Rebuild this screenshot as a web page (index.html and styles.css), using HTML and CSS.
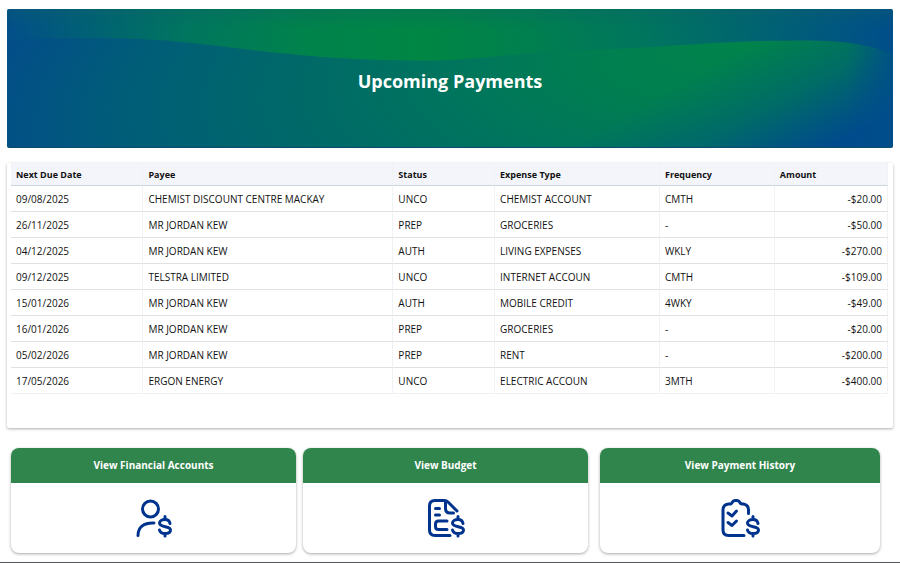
FILE: index.html
```html
<!DOCTYPE html>
<html lang="en">
<head>
<meta charset="utf-8">
<title>Upcoming Payments</title>
<link rel="stylesheet" href="styles.css">
</head>
<body>
<main class="page">
  <header class="banner">
    <svg class="banner-art" viewBox="0 0 886 139" preserveAspectRatio="none" aria-hidden="true">
      <defs>
        <linearGradient id="top" x1="0" y1="0" x2="886" y2="0" gradientUnits="userSpaceOnUse">
          <stop offset="0" stop-color="#034f8a"/>
          <stop offset=".09" stop-color="#006075"/>
          <stop offset=".2" stop-color="#00755f"/>
          <stop offset=".33" stop-color="#00824c"/>
          <stop offset=".47" stop-color="#008644"/>
          <stop offset=".58" stop-color="#00804e"/>
          <stop offset=".72" stop-color="#00755e"/>
          <stop offset=".84" stop-color="#006470"/>
          <stop offset="1" stop-color="#004e8a"/>
        </linearGradient>
        <linearGradient id="shade" x1="0" y1="0" x2="0" y2="1">
          <stop offset="0" stop-color="#0c6066" stop-opacity=".3"/>
          <stop offset="1" stop-color="#0c6066" stop-opacity="0"/>
        </linearGradient>
        <radialGradient id="low" cx="0" cy="0" r="1" gradientUnits="userSpaceOnUse" gradientTransform="translate(750 30) rotate(-8) scale(800 300)">
          <stop offset="0" stop-color="#00844a"/>
          <stop offset=".22" stop-color="#007e51"/>
          <stop offset=".4" stop-color="#00745e"/>
          <stop offset=".6" stop-color="#006869"/>
          <stop offset=".8" stop-color="#005d78"/>
          <stop offset="1" stop-color="#034c8b"/>
        </radialGradient>
        <linearGradient id="corner" x1="750" y1="30" x2="816" y2="144" gradientUnits="userSpaceOnUse">
          <stop offset="0" stop-color="#004b8c" stop-opacity="0"/>
          <stop offset=".5" stop-color="#004b8c" stop-opacity=".35"/>
          <stop offset="1" stop-color="#004b8c"/>
        </linearGradient>
        <linearGradient id="edge" x1="840" y1="0" x2="886" y2="0" gradientUnits="userSpaceOnUse">
          <stop offset="0" stop-color="#004e8a" stop-opacity="0"/>
          <stop offset="1" stop-color="#004e8a" stop-opacity=".8"/>
        </linearGradient>
      </defs>
      <rect width="886" height="139" fill="url(#top)"/>
      <rect width="886" height="20" fill="url(#shade)"/>
      <path d="M0 31C60 29 110 29 148 31C230 37 290 52 420 52C470 52 490 46 560 42C650 40 700 32 780 32C825 31 866 34 886 48V139H0Z" fill="url(#low)"/>
      <path d="M560 42C650 40 700 32 780 32C825 31 866 34 886 48V139H560Z" fill="url(#corner)"/>
      <path d="M780 32C825 31 866 34 886 48V139H780Z" fill="url(#edge)"/>
    </svg>
    <h1 class="banner-title">Upcoming Payments</h1>
  </header>

  <section class="panel">
    <table class="payments">
      <colgroup>
        <col class="col-date"><col class="col-payee"><col class="col-status"><col class="col-type"><col class="col-freq"><col class="col-amount">
      </colgroup>
      <thead>
        <tr><th scope="col">Next Due Date</th><th scope="col">Payee</th><th scope="col">Status</th><th scope="col">Expense Type</th><th scope="col">Frequency</th><th scope="col">Amount</th></tr>
      </thead>
      <tbody>
        <tr><td>09/08/2025</td><td>CHEMIST DISCOUNT CENTRE MACKAY</td><td>UNCO</td><td>CHEMIST ACCOUNT</td><td>CMTH</td><td class="amount">-$20.00</td></tr>
        <tr><td>26/11/2025</td><td>MR JORDAN KEW</td><td>PREP</td><td>GROCERIES</td><td>-</td><td class="amount">-$50.00</td></tr>
        <tr><td>04/12/2025</td><td>MR JORDAN KEW</td><td>AUTH</td><td>LIVING EXPENSES</td><td>WKLY</td><td class="amount">-$270.00</td></tr>
        <tr><td>09/12/2025</td><td>TELSTRA LIMITED</td><td>UNCO</td><td>INTERNET ACCOUN</td><td>CMTH</td><td class="amount">-$109.00</td></tr>
        <tr><td>15/01/2026</td><td>MR JORDAN KEW</td><td>AUTH</td><td>MOBILE CREDIT</td><td>4WKY</td><td class="amount">-$49.00</td></tr>
        <tr><td>16/01/2026</td><td>MR JORDAN KEW</td><td>PREP</td><td>GROCERIES</td><td>-</td><td class="amount">-$20.00</td></tr>
        <tr><td>05/02/2026</td><td>MR JORDAN KEW</td><td>PREP</td><td>RENT</td><td>-</td><td class="amount">-$200.00</td></tr>
        <tr><td>17/05/2026</td><td>ERGON ENERGY</td><td>UNCO</td><td>ELECTRIC ACCOUN</td><td>3MTH</td><td class="amount">-$400.00</td></tr>
      </tbody>
    </table>
  </section>

  <nav class="cards">
    <a class="card" href="#accounts">
      <span class="card-title">View Financial Accounts</span>
      <span class="card-body">
        <svg class="icon" viewBox="0 0 40 40" aria-hidden="true">
          <circle cx="16.500" cy="11" r="8"/>
          <path d="M4 37.500C4 29 10 24.500 20 25"/>
          <path d="M36 25.500C35.500 22.500 33.500 21.500 31 21.500C28 21.500 25.500 22.800 25.500 25C25.500 30 36.500 27.500 36.500 32C36.500 34.500 34 35.500 31 35.500C28 35.500 26 34.500 25.500 32M31 18.500V21.500M31 35.500V38"/>
        </svg>
      </span>
    </a>
    <a class="card" href="#budget">
      <span class="card-title">View Budget</span>
      <span class="card-body">
        <svg class="icon" viewBox="0 0 40 40" aria-hidden="true">
          <path d="M24 37.500H9Q3.500 37.500 3.500 32V8Q3.500 2.500 9 2.500H18.500Q20.500 2.500 22 4L31 13M19.500 3V10.500Q19.500 15 24 15H27.500M9.500 10.500H13.500M9.500 17H13.500M21 23H12.500Q9.500 23 9.500 26V28.500Q9.500 31.500 12.500 31.500H21"/>
          <path d="M37 25.500C36.500 22.500 34.500 21.500 32 21.500C29 21.500 26.500 22.800 26.500 25C26.500 30 37.500 27.500 37.500 32C37.500 34.500 35 35.500 32 35.500C29 35.500 27 34.500 26.500 32M32 18.500V21.500M32 35.500V38"/>
        </svg>
      </span>
    </a>
    <a class="card" href="#history">
      <span class="card-title">View Payment History</span>
      <span class="card-body">
        <svg class="icon" viewBox="0 0 40 40" aria-hidden="true">
          <path d="M24 37.500H8.500Q3 37.500 3 32V12Q3 6.500 8.500 6H10.500Q12 5.500 12.500 4Q13 2.500 15 2.500H17Q19 2.500 19.500 4Q20 5.500 22 6H23.500Q28.500 7 28.500 12V15.500"/>
          <path d="M8 15L12 18L16.500 13M8 24.500L12 27.500L16.500 23"/>
          <path d="M38 25.500C37.500 22.500 35.500 21.500 33 21.500C30 21.500 27.500 22.800 27.500 25C27.500 30 38.500 27.500 38.500 32C38.500 34.500 36 35.500 33 35.500C30 35.500 28 34.500 27.500 32M33 18.500V21.500M33 35.500V38"/>
        </svg>
      </span>
    </a>
  </nav>
</main>
<footer class="page-end"></footer>
</body>
</html>
```
FILE: styles.css
```css
* {
  box-sizing: border-box;
}

body {
  margin: 0;
  min-height: 100vh;
  display: flex;
  flex-direction: column;
  background: #fff;
  color: #111;
  font-family: "Open Sans", sans-serif;
  font-size: 10px;
}

.page {
  flex: 1;
  padding: 9px 7px;
}

.banner {
  position: relative;
  display: flex;
  align-items: center;
  justify-content: center;
  padding: 60px 16px 54px;
  border-radius: 2px;
  overflow: hidden;
  border-bottom: 1px solid #0a4a6c;
}

.banner-art {
  position: absolute;
  inset: 0;
  width: 100%;
  height: 100%;
}

.banner-title {
  position: relative;
  margin: 0;
  color: #fff;
  font-size: 18px;
  line-height: 24px;
  font-weight: 700;
}

.panel {
  margin-top: 15px;
  padding: 0 5px 34px 4px;
  border-radius: 2px;
  box-shadow: 0 1px 3px rgba(0, 0, 0, .32);
}

.payments {
  width: 100%;
  table-layout: fixed;
  border-collapse: separate;
  border-spacing: 0;
}

.col-date { width: 15.1%; }
.col-payee { width: 28.5%; }
.col-status { width: 11.6%; }
.col-type { width: 18.8%; }
.col-freq { width: 13.1%; }
.col-amount { width: 12.9%; }

.payments th,
.payments td {
  padding: 0 5px;
  text-align: left;
  border-right: 1px solid #f0f2f4;
  white-space: nowrap;
}

.payments th {
  height: 23px;
  background: #f4f5fb;
  font-size: 9px;
  font-weight: 700;
  border-bottom: 1px solid #ccd6db;
}

.payments td {
  height: 26px;
  border-bottom: 1px solid #dfe2e4;
}

.payments tbody tr:last-child td {
  border-bottom-color: #f0f1f2;
}

.payments .amount {
  text-align: right;
}

.cards {
  display: grid;
  grid-template-columns: repeat(3, 1fr);
  column-gap: 7px;
  margin: 20px 13px 0 4px;
}

.card {
  display: flex;
  flex-direction: column;
  border-radius: 8px;
  overflow: hidden;
  background: #fff;
  color: #fff;
  text-decoration: none;
  box-shadow: 0 1px 3px rgba(0, 0, 0, .35);
}

.card:last-child {
  margin-left: 5px;
}

.card-title {
  padding: 10px;
  background: #2f854b;
  font-weight: 700;
  line-height: 15px;
  text-align: center;
}

.card-body {
  display: flex;
  justify-content: center;
  padding: 15px;
}

.icon {
  width: 40px;
  height: 40px;
  fill: none;
  stroke: #00338d;
  stroke-width: 3;
  stroke-linecap: round;
  stroke-linejoin: round;
}

.page-end {
  border-top: 1px solid #55565a;
}
```
